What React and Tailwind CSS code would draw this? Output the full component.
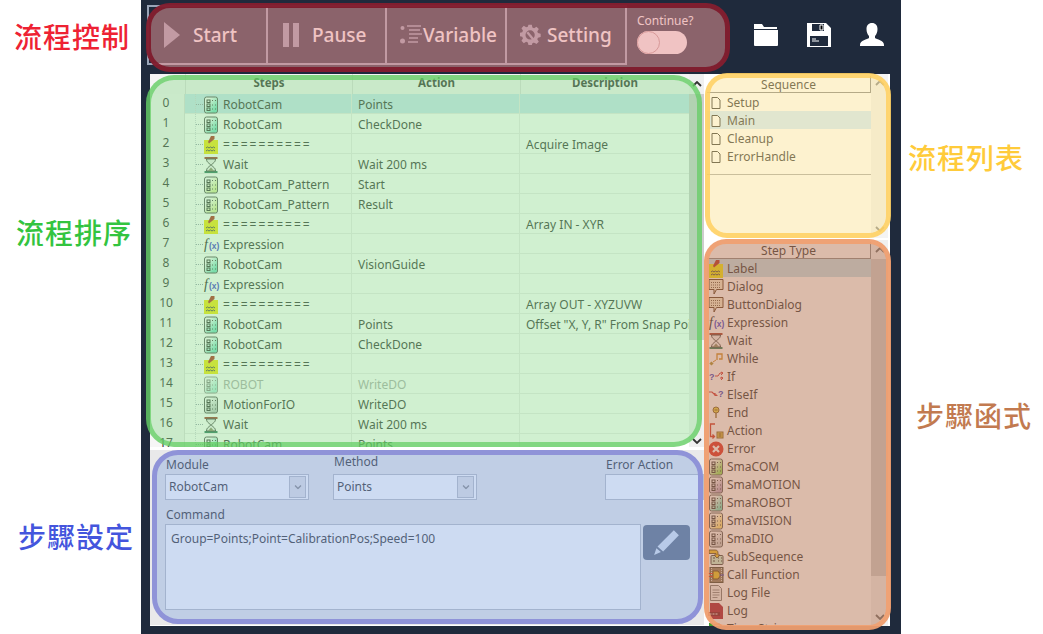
import React from "react";

const rows = [
  ["0", "module", "#6fe0c0", "RobotCam", "Points", ""],
  ["1", "module", "#6fe0c0", "RobotCam", "CheckDone", ""],
  ["2", "label", "", "==========", "", "Acquire Image"],
  ["3", "wait", "", "Wait", "Wait 200 ms", ""],
  ["4", "module", "#d8ee9a", "RobotCam_Pattern", "Start", ""],
  ["5", "module", "#d8ee9a", "RobotCam_Pattern", "Result", ""],
  ["6", "label", "", "==========", "", "Array IN - XYR"],
  ["7", "expr", "", "Expression", "", ""],
  ["8", "module", "#6fe0c0", "RobotCam", "VisionGuide", ""],
  ["9", "expr", "", "Expression", "", ""],
  ["10", "label", "", "==========", "", "Array OUT - XYZUVW"],
  ["11", "module", "#6fe0c0", "RobotCam", "Points", 'Offset "X, Y, R" From Snap Point'],
  ["12", "module", "#6fe0c0", "RobotCam", "CheckDone", ""],
  ["13", "label", "", "==========", "", ""],
  ["14", "module", "#6fe0c0", "ROBOT", "WriteDO", ""],
  ["15", "module", "#b8c4c0", "MotionForIO", "WriteDO", ""],
  ["16", "wait", "", "Wait", "Wait 200 ms", ""],
  ["17", "module", "#6fe0c0", "RobotCam", "Points", ""],
];

const stepTypes = [
  ["label", "", "Label"],
  ["dialog", "", "Dialog"],
  ["dialog", "", "ButtonDialog"],
  ["expr", "", "Expression"],
  ["wait", "", "Wait"],
  ["while", "", "While"],
  ["if", "", "If"],
  ["elseif", "", "ElseIf"],
  ["end", "", "End"],
  ["action", "", "Action"],
  ["error", "", "Error"],
  ["module", "#8fe05a", "SmaCOM"],
  ["module", "#b8a0c0", "SmaMOTION"],
  ["module", "#6fe0c0", "SmaROBOT"],
  ["module", "#ffe27a", "SmaVISION"],
  ["module", "#c8c8c8", "SmaDIO"],
  ["sub", "", "SubSequence"],
  ["call", "", "Call Function"],
  ["file", "", "Log File"],
  ["log", "", "Log"],
  ["time", "", "Time String"],
];

const StepIcon = ({ type, color, dim }) => {
  const cls = "w-[16px] h-[16px] shrink-0 overflow-visible" + (dim ? " opacity-60" : "");
  if (type === "module") {
    const gradId = "grad" + color.slice(1);
    return (
      <svg viewBox="0 0 16 16" className={cls}>
        <defs>
          <linearGradient id={gradId} x1="0" y1="0" x2="1" y2="1">
            <stop offset="0.25" stopColor="#fff" />
            <stop offset="0.8" stopColor={color} />
          </linearGradient>
        </defs>
        <rect x="1.5" y="0" width="13" height="16" rx="2" fill={"url(#" + gradId + ")"} stroke="#555" />
        <rect x="4" y="3" width="3" height="2.5" fill="none" stroke="#333" />
        <rect x="4" y="7" width="3" height="2.5" fill="none" stroke="#333" />
        <rect x="4" y="11" width="3" height="2.5" fill="none" stroke="#333" />
        <path d="M9 3.5h1M12 3.5h1M9 8h1M12 8h1M9 12h1M12 12h1" stroke="#444" strokeWidth="1.2" />
      </svg>
    );
  }
  if (type === "label") {
    return (
      <svg viewBox="0 0 16 16" className={cls}>
        <rect x="1" y="3" width="14" height="14" fill="#f0e80a" />
        <path d="M3 11l1.500-1 1.500 1 1.500-1 1.500 1 1.500-1 1.500 1M3 14l1.500-1 1.500 1 1.500-1 1.500 1 1.500-1 1.500 1" fill="none" stroke="#444" />
        <path d="M5 5L8-1h3.500v3L6 6.500z" fill="#b02a1a" />
      </svg>
    );
  }
  if (type === "wait") {
    return (
      <svg viewBox="0 0 16 16" className={cls}>
        <rect x="1.5" y="0" width="13" height="2" fill="#a03a2a" />
        <rect x="1.5" y="14" width="13" height="2" fill="#2a7a5a" />
        <path d="M3.500 2c0 4 4 4.500 4 6s-4 2-4 6h9c0-4-4-4.500-4-6s4-2 4-6z" fill="#eee" stroke="#444" />
        <path d="M5 14h6L8 10.500z" fill="#8a8a6a" />
      </svg>
    );
  }
  if (type === "expr") {
    return (
      <svg viewBox="0 0 16 16" className={cls}>
        <text x="1" y="12" fontFamily="'Liberation Serif', serif" fontStyle="italic" fontSize="14" fill="#222">f</text>
        <text x="6" y="11.500" fontFamily="'Liberation Sans', sans-serif" fontSize="8.500" fontWeight="700" fill="#3a3ad0">(x)</text>
      </svg>
    );
  }
  if (type === "dialog") {
    return (
      <svg viewBox="0 0 16 16" className={cls}>
        <path d="M1 .5h14v10H8.500L6 15v-4.500H1z" fill="#f5ecd0" stroke="#5a3a20" />
        <path d="M3 3.500h10M3 6h10M3 8.500h10" stroke="#6a5a40" strokeDasharray="1 1" />
      </svg>
    );
  }
  if (type === "while") {
    return (
      <svg viewBox="0 0 16 16" className={cls}>
        <path d="M9 9V3h5v5h-3" fill="none" stroke="#d08a20" strokeWidth="1.3" />
        <rect x="2" y="11" width="3" height="3" fill="#a89030" transform="rotate(45 3.5 12.5)" />
        <path d="M5 11l3-2" stroke="#d08a20" />
      </svg>
    );
  }
  if (type === "if") {
    return (
      <svg viewBox="0 0 16 16" className={cls}>
        <text x="1" y="11" fontFamily="'Liberation Sans', sans-serif" fontSize="9" fontWeight="700" fill="#3a3ac0">?</text>
        <path d="M7 7h3l2-3h3M12 9h3M13 3l2 1-2 2M13 8l2 1-2 2" fill="none" stroke="#d03030" />
      </svg>
    );
  }
  if (type === "elseif") {
    return (
      <svg viewBox="0 0 16 16" className={cls}>
        <path d="M1 5h3l3 3h2M7 6v2.500H9.500" fill="none" stroke="#d03030" strokeWidth="1.200" />
        <text x="10" y="10" fontFamily="'Liberation Sans', sans-serif" fontSize="9" fontWeight="700" fill="#3a3ac0">?</text>
      </svg>
    );
  }
  if (type === "end") {
    return (
      <svg viewBox="0 0 16 16" className={cls}>
        <circle cx="8" cy="5" r="3" fill="#e8d040" stroke="#806020" />
        <path d="M6.500 5h3" stroke="#806020" />
        <path d="M8 8V13" stroke="#806020" strokeWidth="1.300" />
      </svg>
    );
  }
  if (type === "action") {
    return (
      <svg viewBox="0 0 16 16" className={cls}>
        <path d="M7 1H2.500v12.500H6M4.500 11.500l2 2-2 2" fill="none" stroke="#d03020" strokeWidth="1.300" />
        <rect x="9" y="9" width="6" height="6" fill="#e8c840" stroke="#806020" />
        <path d="M10.500 11h3M10.500 13h3" stroke="#604010" />
      </svg>
    );
  }
  if (type === "error") {
    return (
      <svg viewBox="0 0 16 16" className={cls}>
        <circle cx="8" cy="8" r="7.500" fill="#e02a20" />
        <path d="M5 5l6 6M11 5l-6 6" stroke="#fff" strokeWidth="2.200" />
      </svg>
    );
  }
  if (type === "sub") {
    return (
      <svg viewBox="0 0 16 16" className={cls}>
        <rect x="3" y="6.500" width="12" height="9" rx="1" fill="#c8eed4" stroke="#444" />
        <path d="M5 9h2M5 12h2M10 9h1M13 9h1M10 12h1M13 12h1" stroke="#333" strokeWidth="1.200" />
        <path d="M1 1h6c2 0 3 1 3 3v2l2 0-3 3-3-3h2V4.500H1z" fill="#f0c020" stroke="#443010" strokeWidth="0.800" />
      </svg>
    );
  }
  if (type === "call") {
    return (
      <svg viewBox="0 0 16 16" className={cls}>
        <rect x="2" y="0.500" width="13" height="15" fill="#8a7a60" stroke="#443" />
        <path d="M3.500 1v14M13.500 1v14" stroke="#ddd" strokeDasharray="1 1" />
        <path d="M5 4h5l3 4-3 4H5z" fill="#e8c020" stroke="#604010" />
        <path d="M0 6.500h5M0 9.500h5" stroke="#d03020" />
        <path d="M11 8h5" stroke="#3a3ac0" />
      </svg>
    );
  }
  if (type === "file") {
    return (
      <svg viewBox="0 0 16 16" className={cls}>
        <path d="M2.500 0.500h8l3 3v12h-11z" fill="#f0f0f0" stroke="#777" />
        <path d="M4.500 5h7M4.500 7.500h7M4.500 10h7M4.500 12.500h5" stroke="#888" />
      </svg>
    );
  }
  if (type === "log") {
    return (
      <svg viewBox="0 0 16 16" className={cls}>
        <path d="M2 0h9l4 4v12H2z" fill="#a81830" />
        <rect x="0" y="9" width="12" height="4" fill="#7a1020" />
        <path d="M1.500 11h9" stroke="#eee" strokeDasharray="2 1" />
      </svg>
    );
  }
  return (
    <svg viewBox="0 0 16 16" className={cls}>
      <circle cx="9" cy="9" r="6" fill="#eee" stroke="#b05a20" strokeWidth="1.500" />
      <rect x="1" y="2" width="4" height="4" fill="#40a030" />
    </svg>
  );
};

const Chevron = ({ down, className }) => (
  <svg viewBox="0 0 10 6" className={"w-[10px] h-[6px] " + (className || "")}>
    <path d={down ? "M1 1l4 4 4-4" : "M1 5l4-4 4 4"} fill="none" stroke="currentColor" strokeWidth="1.800" />
  </svg>
);

const TreeStub = () => (
  <span className="w-[8px] h-full border-l border-dotted border-gray-300 flex items-center shrink-0">
    <span className="w-full border-t border-dotted border-gray-400" />
  </span>
);

const ToolButton = ({ icon, label, className }) => (
  <div className={"flex items-center border-r-2 border-[#9aa5b8] text-[19px] font-medium text-white " + className}>
    {icon}
    {label}
  </div>
);

const Select = ({ value }) => (
  <div className="w-[144px] h-[26px] border border-[#b9bcc4] bg-white flex items-center justify-between pl-[3px] pr-[2px]">
    <span>{value}</span>
    <span className="w-[17px] h-[22px] bg-[#e4e4e6] border border-[#b9bcc4] flex items-center justify-center text-[#888]">
      <Chevron down className="scale-75" />
    </span>
  </div>
);

const Callout = ({ className, children }) => (
  <div className={"text-[28px] font-medium tracking-[1px] leading-none " + className}>{children}</div>
);

const App = () => {
  return (
    <div
      className="relative w-[1043px] h-[634px] bg-white flex overflow-hidden text-[12px] text-[#333]"
      style={{ fontFamily: '"Noto Sans", "Noto Sans CJK TC", sans-serif' }}
    >
      {/* left labels */}
      <div className="w-[141px] shrink-0 flex flex-col pl-[14px]">
        <Callout className="mt-[23px] text-[#ee2233]">流程控制</Callout>
        <Callout className="mt-[168px] ml-[2px] text-[#33c43f]">流程排序</Callout>
        <Callout className="mt-[276px] ml-[4px] text-[#4455dd]">步驟設定</Callout>
      </div>

      {/* app window */}
      <div className="w-[760px] h-[634px] bg-[#1f2a3c] shrink-0 flex flex-col pt-[5px] pl-[6px]">
        <div className="h-[69px] flex items-start shrink-0">
          <div className="flex h-[60px] border-2 border-r-0 border-[#9aa5b8]">
            <ToolButton
              className="w-[119px] pl-[15px] gap-[13px]"
              label="Start"
              icon={<svg viewBox="0 0 16 26" className="w-[16px] h-[26px]"><path d="M0 0l16 13L0 26z" fill="#9aa5b8" /></svg>}
            />
            <ToolButton
              className="w-[119px] pl-[15px] gap-[13px]"
              label="Pause"
              icon={<svg viewBox="0 0 16 24" className="w-[16px] h-[24px]"><path d="M0 0h6v24H0zM10 0h6v24h-6z" fill="#9aa5b8" /></svg>}
            />
            <ToolButton
              className="w-[120px] pl-[13px]"
              label="Variable"
              icon={
                <svg viewBox="0 0 23 20" className="w-[23px] h-[20px]">
                  <circle cx="2.500" cy="3" r="2" fill="#9aa5b8" />
                  <circle cx="2.500" cy="16" r="2.500" fill="#9aa5b8" />
                  <path d="M7 1h14M9 5h11M9 9h13M9 13h9M8 17h10" stroke="#9aa5b8" strokeWidth="1.300" />
                </svg>
              }
            />
            <ToolButton
              className="w-[120px] pl-[13px] gap-[5px]"
              label="Setting"
              icon={
                <svg viewBox="0 0 24 24" className="w-[22px] h-[24px]">
                  <path fillRule="evenodd" fill="#9aa5b8" d="M10 1h4l.7 3.200 2 .8 2.800-1.800 2.800 2.800-1.800 2.800.8 2 3.200.7v4l-3.200.7-.8 2 1.800 2.800-2.800 2.800-2.800-1.800-2 .8L14 25h-4l-.7-3.200-2-.8-2.800 1.800-2.800-2.800 1.800-2.800-.8-2L-.5 14.500v-4l3.200-.7.8-2L1.700 5 4.500 2.200l2.800 1.800 2-.8zM12 7.500a5.500 5.500 0 1 0 0 11 5.500 5.500 0 0 0 0-11z" transform="scale(.92)" />
                  <path d="M8 9l9 11" stroke="#9aa5b8" strokeWidth="2.500" />
                </svg>
              }
            />
          </div>
          <div className="flex flex-col pl-[10px] pt-[8px] text-white">
            <span className="leading-[16px]">Continue?</span>
            <div className="mt-[2px] w-[50px] h-[23px] rounded-full bg-white flex items-center">
              <span className="w-[23px] h-[23px] rounded-full bg-white border border-[#c8a0a0]" />
            </div>
          </div>
          <div className="flex items-center gap-[29px] pl-[60px] pt-[18px]">
            <svg viewBox="0 0 24 24" className="w-[24px] h-[24px]">
              <path d="M0 1h8l2 3h13v2H0zM0 7h24v15a1 1 0 0 1-1 1H1a1 1 0 0 1-1-1z" fill="#fff" />
            </svg>
            <svg viewBox="0 0 24 24" className="w-[24px] h-[24px]">
              <path fillRule="evenodd" d="M0 0h19l5 5v19H0zM5 1v7h12V1zM3 13v10h18V13z" fill="#fff" />
              <path d="M13 2h3v5h-3zM5 16h4M5 18h7" stroke="#fff" />
            </svg>
            <svg viewBox="0 0 24 24" className="w-[24px] h-[24px]">
              <path d="M12 0c3.500 0 5.500 2.500 5.500 6 0 3-1 5.500-2.500 7v2c1.500 1.500 9 2 9 7v1H0v-1c0-5 7.500-5.500 9-7v-2C7.500 11.500 6.500 9 6.500 6 6.500 2.500 8.500 0 12 0z" fill="#fff" />
            </svg>
          </div>
        </div>

        <div className="w-[740px] h-[552px] ml-[3px] bg-white flex shrink-0">
          <div className="w-[554px] shrink-0 flex flex-col">
            {/* steps table */}
            <div className="h-[373px] flex overflow-hidden shrink-0">
              <div className="w-[539px] shrink-0 flex flex-col">
                <div className="grid grid-cols-[35px_167px_168px_169px] h-[20px] shrink-0 font-bold text-[11.5px] text-center leading-[18px] bg-[#f4f4f4]">
                  <span />
                  <span className="border-l border-[#ddd]">Steps</span>
                  <span className="border-l border-[#ddd]">Action</span>
                  <span className="border-l border-[#ddd]">Description</span>
                </div>
                {rows.map((r, i) => (
                  <div
                    key={r[0]}
                    className={"grid grid-cols-[35px_167px_168px_169px] h-[20px] shrink-0 border-b border-[#ececec] leading-[21px] " + (i === 0 ? "bg-[#c9e4f1]" : "bg-white")}
                  >
                    <span className="text-center pr-[2px] bg-[#f6f6f6] border-r border-[#e0e0e0] leading-[18px]">{r[0]}</span>
                    <span className="flex items-center pl-[10px] gap-0 border-r border-[#ececec] overflow-visible whitespace-nowrap">
                      <TreeStub />
                      <StepIcon type={r[1]} color={r[2]} dim={r[0] === "14"} />
                      <span className={"ml-[4px] " + (r[0] === "14" ? "text-[#aaa] " : "") + (r[3] === "==========" ? "tracking-[2px]" : "")}>{r[3]}</span>
                    </span>
                    <span className={"pl-[6px] border-r border-[#ececec] " + (r[0] === "14" ? "text-[#aaa]" : "")}>{r[4]}</span>
                    <span className="pl-[6px] overflow-hidden whitespace-nowrap">{r[5]}</span>
                  </div>
                ))}
              </div>
              <div className="flex-1 flex flex-col bg-[#f0f0f0]">
                <div className="h-[20px] flex items-center justify-center text-[#333] shrink-0"><Chevron /></div>
                <div className="h-[246px] bg-[#cdcdcd] shrink-0" />
                <div className="flex-1" />
                <div className="h-[12px] flex items-center justify-center text-[#333] shrink-0"><Chevron down /></div>
              </div>
            </div>

            {/* step settings */}
            <div className="mt-[3px] h-[175px] bg-[#e9e9ea] flex flex-col pl-[15px] pt-[6px] shrink-0">
              <div className="flex h-[44px]">
                <div className="w-[168px] flex flex-col">
                  <span className="leading-[18px] pl-[1px]">Module</span>
                  <Select value="RobotCam" />
                </div>
                <div className="w-[272px] flex flex-col">
                  <span className="leading-[18px] -mt-[3px] pl-[1px] mb-[3px]">Method</span>
                  <Select value="Points" />
                </div>
                <div className="flex-1 flex flex-col">
                  <span className="leading-[18px] pl-[1px]">Error Action</span>
                  <div className="h-[26px] border border-[#b9bcc4] bg-white" />
                </div>
              </div>
              <span className="leading-[18px] mt-[6px] pl-[1px]">Command</span>
              <div className="flex gap-[2px]">
                <div className="w-[476px] h-[86px] border border-[#b9bcc4] bg-white px-[5px] pt-[5px]">
                  Group=Points;Point=CalibrationPos;Speed=100
                </div>
                <div className="w-[47px] h-[35px] mt-[1px] rounded-[4px] bg-[#616c7f] flex items-center justify-center">
                  <svg viewBox="0 0 24 24" className="w-[27px] h-[27px]">
                    <path d="M18.500 1l4.500 4.500L9 20 4 15.500zM3 17l4 3.500L1 23z" fill="#dde3ee" />
                  </svg>
                </div>
              </div>
            </div>
          </div>

          {/* right lists */}
          <div className="flex-1 flex flex-col pl-[3px] pr-[2px]">
            <div className="h-[164px] flex shrink-0 overflow-hidden">
              <div className="w-[164px] shrink-0 flex flex-col pt-[2px]">
                <div className="h-[17px] shrink-0 text-center leading-[18px] border-b border-r border-[#888]">Sequence</div>
                {["Setup", "Main", "Cleanup", "ErrorHandle"].map((s, i) => (
                  <div key={s} className={"h-[18px] shrink-0 flex items-center pl-[4px] pt-[2px] gap-[6px] " + (i === 1 ? "bg-[#d0ebff]" : "")}>
                    <svg viewBox="0 0 10 12" className="w-[10px] h-[12px] shrink-0">
                      <path d="M1 .5h5.500L9 3v8.500H1z" fill="#fff" stroke="#333" />
                    </svg>
                    {s}
                  </div>
                ))}
                <div className="mt-[9px] border-b border-[#aaa]" />
              </div>
              <div className="flex-1 flex flex-col justify-between items-center bg-[#f4f4f4] text-[#888] py-[6px]">
                <Chevron />
                <Chevron down />
              </div>
            </div>
            <div className="mt-[2px] flex-1 flex min-h-0 overflow-hidden">
              <div className="w-[164px] shrink-0 flex flex-col pt-[2px]">
                <div className="h-[17px] shrink-0 text-center leading-[18px] border-b border-r border-[#888]">Step Type</div>
                {stepTypes.map((s, i) => (
                  <div key={s[2]} className={"h-[18px] shrink-0 flex items-center pl-[1px] pt-[2px] gap-[3px] " + (i === 0 ? "bg-[#c3e0ea]" : "")}>
                    <StepIcon type={s[0]} color={s[1]} />
                    <span>{s[2]}</span>
                  </div>
                ))}
              </div>
              <div className="w-[17px] shrink-0 flex flex-col bg-[#f0f0f0] text-[#666]">
                <div className="h-[19px] flex items-center justify-center shrink-0"><Chevron /></div>
                <div className="h-[317px] bg-[#cdcdcd] shrink-0" />
                <div className="flex-1 flex items-end justify-center pb-[6px]"><Chevron down /></div>
              </div>
            </div>
          </div>
        </div>
      </div>

      {/* right labels */}
      <div className="flex-1 flex flex-col">
        <Callout className="mt-[144px] ml-[7px] text-[#ffcb3a]">流程列表</Callout>
        <Callout className="mt-[230px] ml-[15px] text-[#c27a50]">步驟函式</Callout>
      </div>

      {/* coloured highlight frames */}
      <div className="absolute left-[146px] top-[3px] w-[584px] h-[69px] rounded-[24px] border-[5px] border-[#7f1a2c]/95 bg-[#e39292]/55" />
      <div className="absolute left-[146px] top-[75px] w-[556px] h-[372px] rounded-[28px] border-[5px] border-[#60cc60]/70 bg-[#89d989]/40" />
      <div className="absolute left-[705px] top-[73px] w-[186px] h-[165px] rounded-[22px] border-[5px] border-[#ffd060]/85 bg-[#fade87]/40" />
      <div className="absolute left-[704px] top-[239px] w-[187px] h-[391px] rounded-[22px] border-[5px] border-[#f2a070]/90 bg-[#b77856]/50" />
      <div className="absolute left-[152px] top-[450px] w-[551px] h-[174px] rounded-[26px] border-[5px] border-[#8f93d8] bg-[#82a5de]/40" />
    </div>
  );
};

export default App;
